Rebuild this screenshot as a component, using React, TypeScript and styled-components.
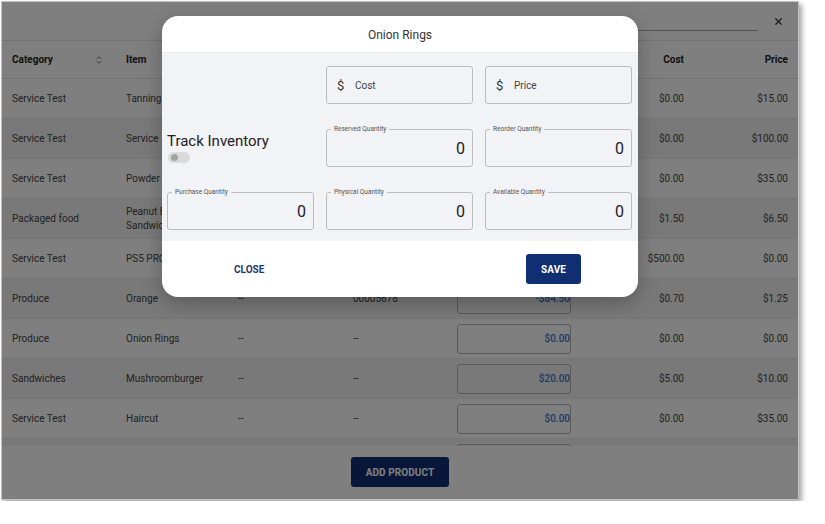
import styled, { createGlobalStyle } from 'styled-components';
import { ChevronsUpDown, X } from 'lucide-react';

const GlobalStyle = createGlobalStyle`
  body {
    margin: 0;
    background: #ffffff;
    font-family: Roboto, "Liberation Sans", sans-serif;
  }
`;

const Screen = styled.div`
  padding: 1px;
`;

const Frame = styled.div`
  position: relative;
  width: 796px;
  height: 497px;
  border: 1px solid #c2c2c2;
  box-shadow: 3px 3px 5px rgba(0, 0, 0, 0.35);
  background: #ffffff;
  overflow: hidden;
  display: flex;
  flex-direction: column;
`;

const TopBar = styled.div`
  height: 38px;
  display: flex;
  justify-content: flex-end;
  align-items: center;
  gap: 15px;
  padding-right: 14px;
`;

const SearchLine = styled.div`
  width: 180px;
  height: 1px;
  margin-top: 18px;
  background: #a8a8a8;
`;

const CloseIcon = styled(X)`
  color: #333;
`;

const columns = '114px 112px 115px 104px 143px 104px 104px';

const HeaderRow = styled.div`
  display: grid;
  grid-template-columns: ${columns};
  height: 37px;
  align-items: center;
  border-top: 1px solid #e6e6e6;
  border-bottom: 1px solid #e6e6e6;
  font-size: 10px;
  font-weight: 700;
  color: #222;
`;

const HeadCell = styled.div<{ $right?: boolean }>`
  display: flex;
  align-items: center;
  justify-content: ${(p) => (p.$right ? 'flex-end' : 'space-between')};
  padding: 0 10px;
`;

const SortIcon = styled(ChevronsUpDown)`
  color: #555;
  margin-right: 2px;
`;

const TableBody = styled.div`
  height: 367px;
  overflow: hidden;
`;

const Row = styled.div`
  display: grid;
  grid-template-columns: ${columns};
  height: 39px;
  align-items: center;
  border-bottom: 1px solid #ececec;
  font-size: 10px;
  color: #444;

  &:nth-child(even) {
    background: #f2f2f2;
  }
`;

const Cell = styled.div<{ $right?: boolean }>`
  padding: 0 10px;
  text-align: ${(p) => (p.$right ? 'right' : 'left')};
  line-height: 14px;
`;

const AmountBox = styled.div`
  width: 112px;
  height: 28px;
  margin-left: 10px;
  border: 1px solid #b4b4b4;
  border-radius: 3px;
  display: flex;
  align-items: center;
  justify-content: flex-end;
  font-size: 10px;
  font-weight: 500;
  color: #3a70cc;
`;

const Footer = styled.div`
  flex: 1;
  display: flex;
  justify-content: center;
  align-items: center;
  padding-bottom: 1px;
`;

const PrimaryButton = styled.button`
  height: 30px;
  padding: 0 15px;
  border: none;
  border-radius: 3px;
  background: #102e72;
  color: #ffffff;
  font-family: Roboto, "Liberation Sans", sans-serif;
  font-size: 10px;
  font-weight: 700;
  letter-spacing: 0.1px;
`;

const Overlay = styled.div`
  position: absolute;
  inset: 0;
  background: rgba(0, 0, 0, 0.5);
  display: flex;
  justify-content: center;
  align-items: flex-start;
  padding-top: 14px;
`;

const Modal = styled.div`
  width: 476px;
  background: #ffffff;
  border-radius: 16px;
  overflow: hidden;
  box-shadow: 0 6px 20px rgba(0, 0, 0, 0.25);
`;

const ModalHeader = styled.div`
  height: 37px;
  display: flex;
  justify-content: center;
  align-items: center;
  padding-top: 2px;
  box-sizing: border-box;
  border-bottom: 1px solid #ececec;
  font-size: 12px;
  color: #333;
`;

const ModalBody = styled.div`
  background: #f2f3f7;
  padding: 13px 6px 11px 5px;
  display: grid;
  grid-template-columns: repeat(3, 147px);
  grid-auto-rows: 38px;
  column-gap: 12px;
  row-gap: 25px;
`;

const FieldBox = styled.div`
  position: relative;
  border: 1px solid #bdbdbd;
  border-radius: 3px;
  display: flex;
  align-items: center;
`;

const FieldLabel = styled.span`
  position: absolute;
  top: -5px;
  left: 4px;
  padding: 0 3px;
  background: #f2f3f7;
  font-size: 6.5px;
  line-height: 8px;
  color: #555;
`;

const FieldValue = styled.span`
  flex: 1;
  text-align: right;
  padding-right: 7px;
  font-size: 16px;
  color: #222;
`;

const Dollar = styled.span`
  font-size: 13px;
  color: #333;
  padding-left: 10px;
  width: 18px;
`;

const Placeholder = styled.span`
  font-size: 10px;
  color: #444;
`;

const TrackCell = styled.div`
  display: flex;
  flex-direction: column;
  padding-top: 3px;
`;

const TrackLabel = styled.div`
  font-size: 15px;
  line-height: 18px;
  color: #222;
`;

const Toggle = styled.div`
  position: relative;
  width: 22px;
  height: 11px;
  margin-top: 2px;
  margin-left: 1px;
  border-radius: 6px;
  background: #dadada;
`;

const ToggleThumb = styled.span`
  position: absolute;
  top: 2px;
  left: 3px;
  width: 7px;
  height: 7px;
  border-radius: 50%;
  background: #a3a3a3;
`;

const ModalFooter = styled.div`
  height: 56px;
  display: flex;
  justify-content: space-between;
  align-items: center;
  padding: 0 57px 0 56px;
`;

const TextButton = styled.button`
  height: 30px;
  padding: 0 16px;
  border: none;
  background: transparent;
  color: #1f3a70;
  font-family: Roboto, "Liberation Sans", sans-serif;
  font-size: 10px;
  font-weight: 700;
`;

type Product = {
  category: string;
  item: string;
  variant: string;
  barcode: string;
  amount: string;
  cost: string;
  price: string;
};

const products: Product[] = [
  { category: 'Service Test', item: 'Tanning', variant: '--', barcode: '--', amount: '$0.00', cost: '$0.00', price: '$15.00' },
  { category: 'Service Test', item: 'Service', variant: '', barcode: '', amount: '$0.00', cost: '$0.00', price: '$100.00' },
  { category: 'Service Test', item: 'Powder', variant: '--', barcode: '--', amount: '$0.00', cost: '$0.00', price: '$35.00' },
  { category: 'Packaged food', item: 'Peanut Butter Sandwich', variant: '--', barcode: '--', amount: '$0.00', cost: '$1.50', price: '$6.50' },
  { category: 'Service Test', item: 'PS5 PRO', variant: '--', barcode: '--', amount: '$0.00', cost: '$500.00', price: '$0.00' },
  { category: 'Produce', item: 'Orange', variant: '--', barcode: '00005678', amount: '-$84.50', cost: '$0.70', price: '$1.25' },
  { category: 'Produce', item: 'Onion Rings', variant: '--', barcode: '--', amount: '$0.00', cost: '$0.00', price: '$0.00' },
  { category: 'Sandwiches', item: 'Mushroomburger', variant: '--', barcode: '--', amount: '$20.00', cost: '$5.00', price: '$10.00' },
  { category: 'Service Test', item: 'Haircut', variant: '--', barcode: '--', amount: '$0.00', cost: '$0.00', price: '$35.00' },
  // last row only peeks in under the scroll edge
  { category: '', item: '', variant: '', barcode: '', amount: '', cost: '', price: '' },
];

function QuantityField({ label }: { label: string }) {
  return (
    <FieldBox>
      <FieldLabel>{label}</FieldLabel>
      <FieldValue>0</FieldValue>
    </FieldBox>
  );
}

function MoneyField({ placeholder }: { placeholder: string }) {
  return (
    <FieldBox>
      <Dollar>$</Dollar>
      <Placeholder>{placeholder}</Placeholder>
    </FieldBox>
  );
}

export default function App() {
  return (
    <Screen>
      <GlobalStyle />
      <Frame>
        <TopBar>
          <SearchLine />
          <CloseIcon size={11} strokeWidth={2.6} />
        </TopBar>
        <HeaderRow>
          <HeadCell>
            Category
            <SortIcon size={10} strokeWidth={2} />
          </HeadCell>
          <HeadCell>Item</HeadCell>
          <HeadCell>Variant</HeadCell>
          <HeadCell>Barcode</HeadCell>
          <HeadCell>Inventory</HeadCell>
          <HeadCell $right>Cost</HeadCell>
          <HeadCell $right>Price</HeadCell>
        </HeaderRow>
        <TableBody>
          {products.map((p, i) => (
            <Row key={i}>
              <Cell>{p.category}</Cell>
              <Cell>{p.item}</Cell>
              <Cell>{p.variant}</Cell>
              <Cell>{p.barcode}</Cell>
              <AmountBox>{p.amount}</AmountBox>
              <Cell $right>{p.cost}</Cell>
              <Cell $right>{p.price}</Cell>
            </Row>
          ))}
        </TableBody>
        <Footer>
          <PrimaryButton>ADD PRODUCT</PrimaryButton>
        </Footer>

        <Overlay>
          <Modal>
            <ModalHeader>Onion Rings</ModalHeader>
            <ModalBody>
              <div />
              <MoneyField placeholder="Cost" />
              <MoneyField placeholder="Price" />
              <TrackCell>
                <TrackLabel>Track Inventory</TrackLabel>
                <Toggle>
                  <ToggleThumb />
                </Toggle>
              </TrackCell>
              <QuantityField label="Reserved Quantity" />
              <QuantityField label="Reorder Quantity" />
              <QuantityField label="Purchase Quantity" />
              <QuantityField label="Physical Quantity" />
              <QuantityField label="Available Quantity" />
            </ModalBody>
            <ModalFooter>
              <TextButton>CLOSE</TextButton>
              <PrimaryButton>SAVE</PrimaryButton>
            </ModalFooter>
          </Modal>
        </Overlay>
      </Frame>
    </Screen>
  );
}
